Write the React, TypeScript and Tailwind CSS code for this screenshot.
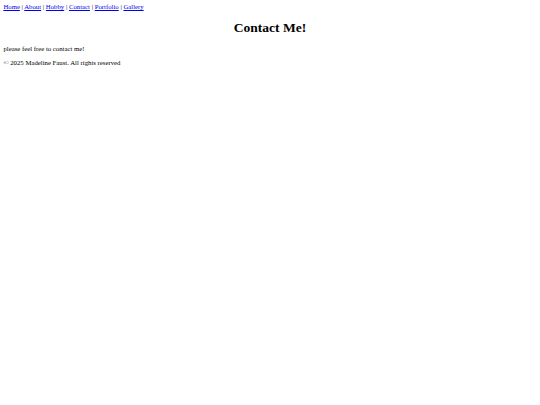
import React from 'react';

const links = ['Home', 'About', 'Hobby', 'Contact', 'Portfolio', 'Gallery'];

export default function App() {
  return (
    <div className="min-h-[405px] bg-white p-[3.4px] text-[6.75px] leading-[normal] text-black [font-family:'Liberation_Serif',serif]">
      {/* navegación */}
      <nav>
        {links.map((name, i) => (
          <React.Fragment key={name}>
            {i > 0 && ' | '}
            <a href="#" className="text-[#0000ee] underline">
              {name}
            </a>
          </React.Fragment>
        ))}
      </nav>

      <h1 className="mt-[10px] mb-[8.5px] text-center text-[13.5px] font-bold leading-[normal]">
        Contact Me!
      </h1>

      <p>please feel free to contact me!</p>

      <footer className="mt-[6.75px]">
        <p>© 2025 Madeline Faust. All rights reserved</p>
      </footer>
    </div>
  );
}
